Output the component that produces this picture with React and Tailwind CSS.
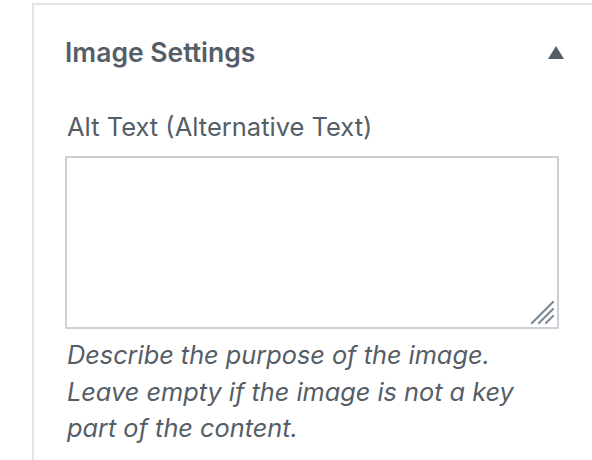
import React from "react";

const font = { fontFamily: "Inter, 'Noto Sans', sans-serif" };

export default function App() {
  return (
    <div className="w-[592px] h-[460px] bg-white overflow-hidden" style={font}>
      <div className="ml-[32px] h-full border-l-2 border-[#e2e4e7]">
        <div className="mt-[3px] border-t-2 border-[#e2e4e7]">
          <div className="pl-[31px] pr-[30px]">
            {/* panel header */}
            <div className="flex items-center justify-between pt-[31px] pb-[4px]">
              <h2 className="text-[26.5px] leading-[32px] font-semibold text-[#555d66]">
                Image Settings
              </h2>
              <svg width="16" height="13" viewBox="0 0 16 13" className="mr-[-2px]">
                <polygon points="8,0 16,13 0,13" fill="#555d66" />
              </svg>
            </div>

            {/* alt text field */}
            <label className="block mt-[40px] pl-[2px] text-[25.5px] leading-[30px] text-[#555d66]">
              Alt Text (Alternative Text)
            </label>
            <div className="relative mt-[14px] w-[494px] h-[173px] border-2 border-[#ccd0d4] bg-white">
              <svg
                width="26"
                height="26"
                viewBox="0 0 26 26"
                className="absolute right-[2px] bottom-[2px]"
              >
                <g stroke="#7e8993" strokeWidth="2.2" strokeLinecap="round">
                  <line x1="3" y1="24" x2="24" y2="3" />
                  <line x1="10" y1="24" x2="24" y2="10" />
                  <line x1="17" y1="24" x2="24" y2="17" />
                </g>
              </svg>
            </div>

            {/* help text */}
            <p className="mt-[8px] pl-[2px] text-[25.3px] leading-[36.5px] italic text-[#555d66]">
              <span className="block">Describe the purpose of the image.</span>
              <span className="block">Leave empty if the image is not a key</span>
              <span className="block">part of the content.</span>
            </p>
          </div>
        </div>
      </div>
    </div>
  );
}
